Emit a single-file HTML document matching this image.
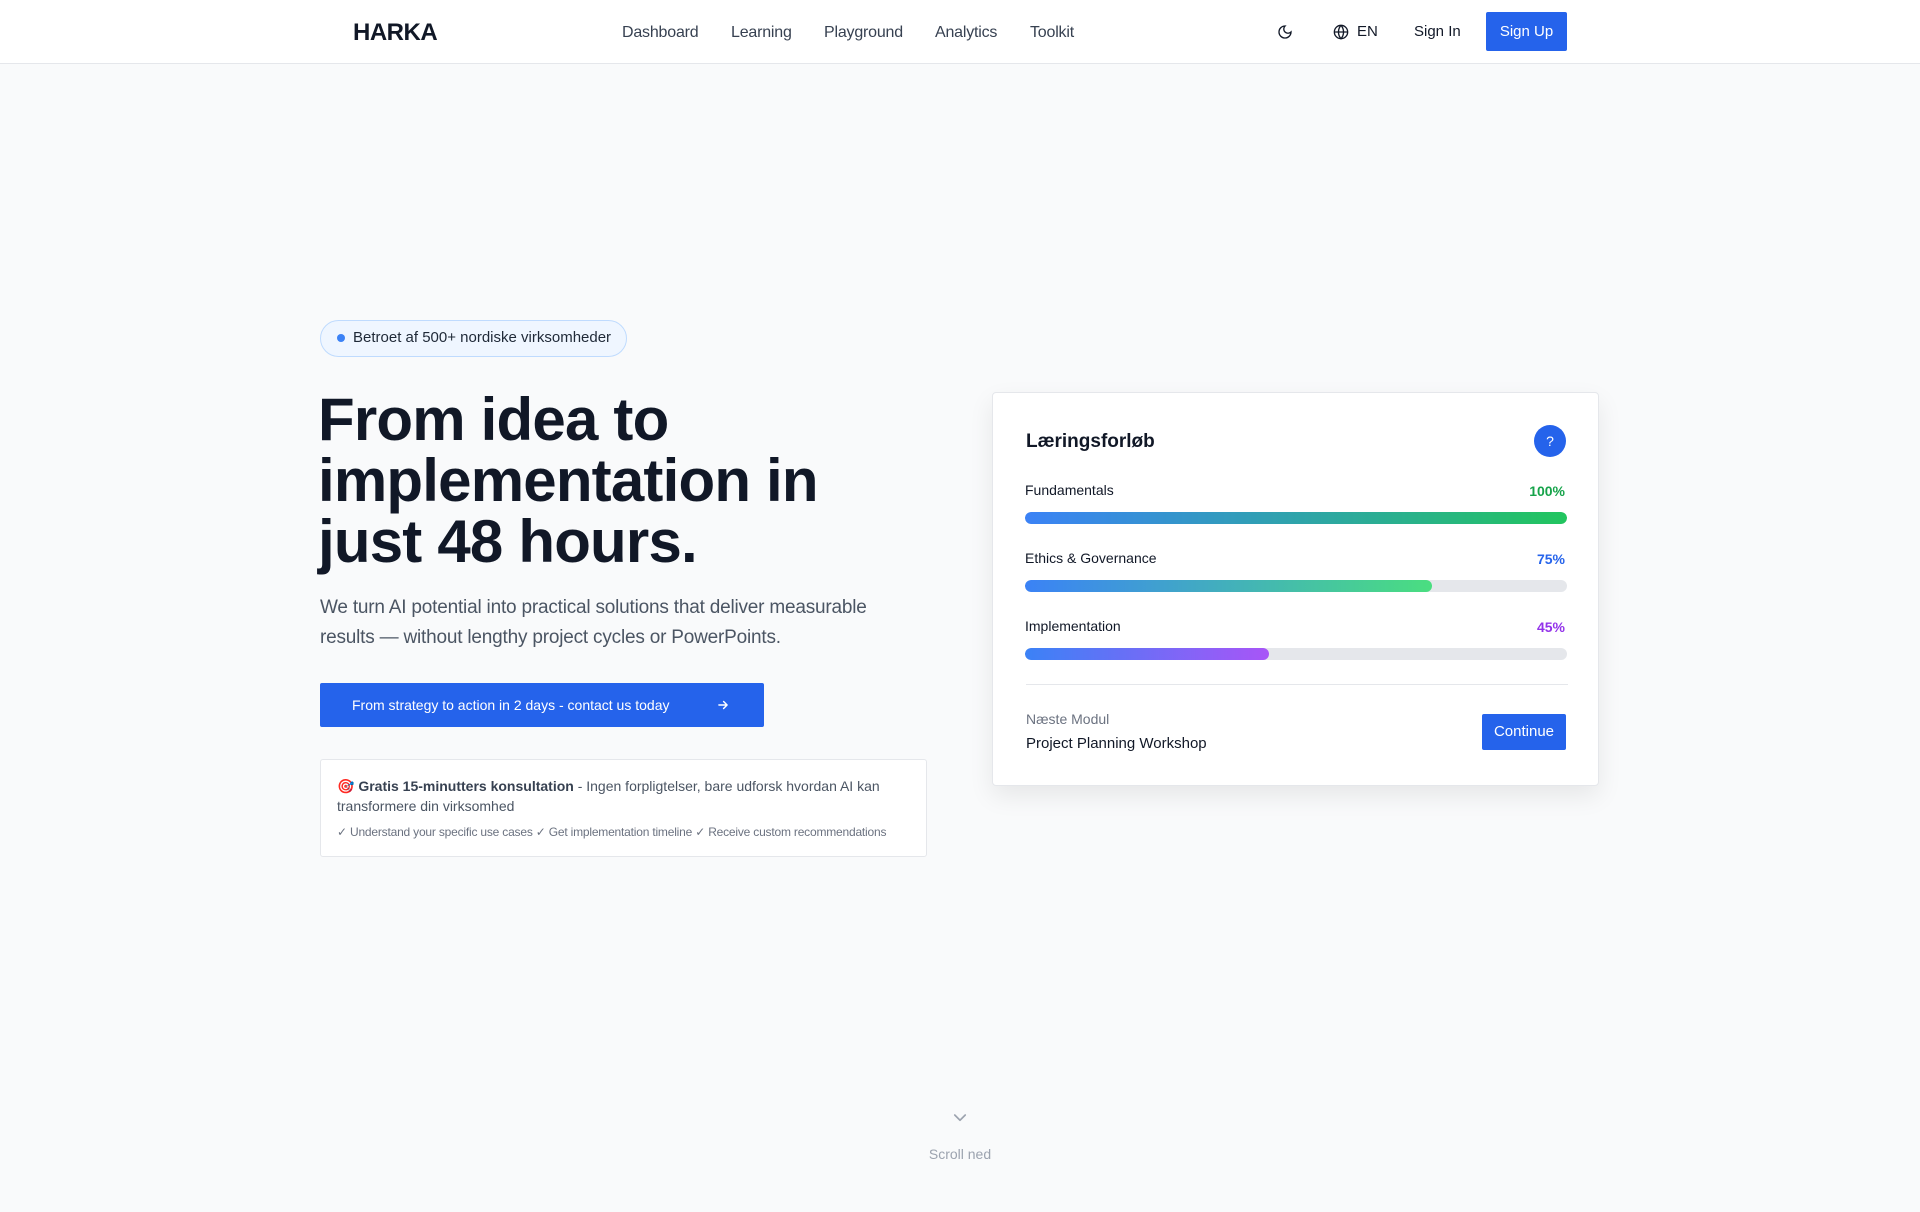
<!DOCTYPE html>
<html><head><meta charset="utf-8"><style>
*{margin:0;padding:0;box-sizing:border-box}
body{width:1920px;height:1212px;background:#f9fafb;font-family:"Liberation Sans",sans-serif;color:#111827;position:relative;overflow:hidden}
.abs{position:absolute;white-space:nowrap}
nav{position:absolute;left:0;top:0;width:1920px;height:64px;background:#fff;border-bottom:1px solid #e5e7eb}
.nl{position:absolute;top:24px;font-size:16px;color:#374151;letter-spacing:-0.2px}
.bar{position:absolute;left:1025px;width:542px;height:12px;border-radius:6px;background:#e5e7eb;overflow:hidden}
.bar i{display:block;height:100%;border-radius:6px}
.lbl{position:absolute;left:1025px;font-size:14px;color:#111827}
.pct{position:absolute;right:33px;font-size:14px;font-weight:bold}
</style></head><body>
<nav>
<div class="abs" style="left:353px;top:19px;font-size:24px;font-weight:bold;letter-spacing:-0.5px">HARKA</div>
<div class="nl" style="left:622px">Dashboard</div>
<div class="nl" style="left:731px">Learning</div>
<div class="nl" style="left:824px">Playground</div>
<div class="nl" style="left:935px">Analytics</div>
<div class="nl" style="left:1030px">Toolkit</div>
<svg class="abs" style="left:1277px;top:24px" width="16" height="16" viewBox="0 0 24 24" fill="none" stroke="#111827" stroke-width="2" stroke-linecap="round"><path d="M12 3a6 6 0 0 0 9 9 9 9 0 1 1-9-9z"/></svg>
<svg class="abs" style="left:1333px;top:24px" width="16" height="16" viewBox="0 0 24 24" fill="none" stroke="#111827" stroke-width="2"><circle cx="12" cy="12" r="10"/><path d="M2 12h20M12 2a15 15 0 0 1 0 20a15 15 0 0 1 0-20"/></svg>
<div class="abs" style="left:1357px;top:23px;font-size:15px">EN</div>
<div class="abs" style="left:1414px;top:23px;font-size:15px">Sign In</div>
<div class="abs" style="left:1486px;top:12px;width:81px;height:39px;background:#2563eb;border-radius:2px;color:#fff;font-size:15px;text-align:center;line-height:39px">Sign Up</div>
</nav>

<div class="abs" style="left:320px;top:320px;width:307px;height:37px;border:1px solid #bfdbfe;background:#eff6ff;border-radius:19px"></div>
<div class="abs" style="left:337px;top:334px;width:8px;height:8px;border-radius:50%;background:#3b82f6"></div>
<div class="abs" style="left:353px;top:329px;font-size:15px;color:#1f2937">Betroet af 500+ nordiske virksomheder</div>

<div class="abs" style="left:318px;top:389px;font-size:60px;font-weight:bold;line-height:61px;letter-spacing:-0.8px;color:#111827">From idea to<br>implementation in<br>just 48 hours.</div>

<div class="abs" style="left:320px;top:593px;font-size:19px;line-height:30px;color:#4b5563;letter-spacing:-0.2px">We turn AI potential into practical solutions that deliver measurable<br>results — without lengthy project cycles or PowerPoints.</div>

<div class="abs" style="left:320px;top:683px;width:444px;height:44px;background:#2563eb;border-radius:2px;color:#fff;font-size:14px;line-height:44px;padding-left:32px">From strategy to action in 2 days - contact us today
<svg style="position:absolute;left:396px;top:15px" width="14" height="14" viewBox="0 0 24 24" fill="none" stroke="#fff" stroke-width="2.5" stroke-linecap="round" stroke-linejoin="round"><path d="M5 12h14M13 6l6 6-6 6"/></svg></div>

<div class="abs" style="left:320px;top:759px;width:607px;height:98px;background:#fff;border:1px solid #e5e7eb;border-radius:3px"></div>
<div class="abs" style="left:337px;top:776px;font-size:14px;line-height:20px;color:#4b5563">🎯 <b style="color:#374151">Gratis 15-minutters konsultation</b> - Ingen forpligtelser, bare udforsk hvordan AI kan<br>transformere din virksomhed</div>
<div class="abs" style="left:337px;top:825px;font-size:12px;color:#6b7280;letter-spacing:-0.2px">✓ Understand your specific use cases ✓ Get implementation timeline ✓ Receive custom recommendations</div>

<div class="abs" style="left:992px;top:392px;width:607px;height:394px;background:#fff;border:1px solid #e5e7eb;border-radius:4px;box-shadow:0 10px 25px rgba(0,0,0,0.08)">
<div class="abs" style="left:33px;top:38px;font-size:19px;font-weight:bold">Læringsforløb</div>
<div class="abs" style="right:32px;top:32px;width:32px;height:32px;border-radius:50%;background:#2563eb;color:#fff;text-align:center;line-height:32px;font-size:14px">?</div>
<div class="pct" style="top:90px;color:#16a34a">100%</div>
<div class="pct" style="top:158px;color:#2563eb">75%</div>
<div class="pct" style="top:226px;color:#9333ea">45%</div>
<div class="abs" style="left:33px;top:291px;width:542px;height:1px;background:#e5e7eb"></div>
<div class="abs" style="left:33px;top:318px;font-size:14px;color:#6b7280">Næste Modul</div>
<div class="abs" style="left:33px;top:342px;font-size:15px;color:#111827">Project Planning Workshop</div>
<div class="abs" style="right:32px;top:321px;width:84px;height:36px;background:#2563eb;border-radius:2px;color:#fff;font-size:15px;text-align:center;line-height:36px">Continue</div>
</div>
<div class="lbl" style="top:482px">Fundamentals</div>
<div class="bar" style="top:512px"><i style="width:100%;background:linear-gradient(90deg,#3b82f6,#22c55e)"></i></div>
<div class="lbl" style="top:550px">Ethics &amp; Governance</div>
<div class="bar" style="top:580px"><i style="width:75%;background:linear-gradient(90deg,#3b82f6,#4ade80)"></i></div>
<div class="lbl" style="top:618px">Implementation</div>
<div class="bar" style="top:648px"><i style="width:45%;background:linear-gradient(90deg,#3b82f6,#a855f7)"></i></div>

<svg class="abs" style="left:951px;top:1111px" width="18" height="14" viewBox="0 0 24 18" fill="none" stroke="#9ca3af" stroke-width="2.2" stroke-linecap="round" stroke-linejoin="round"><path d="M5 5l7 7 7-7"/></svg>
<div class="abs" style="left:0;width:1920px;text-align:center;top:1146px;font-size:14px;color:#9ca3af">Scroll ned</div>
</body></html>
